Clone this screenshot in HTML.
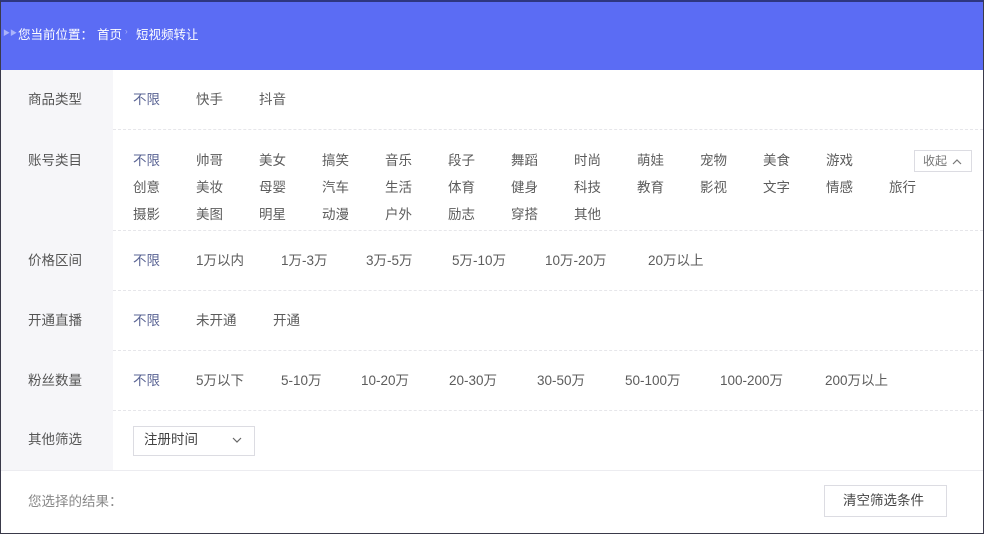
<!DOCTYPE html>
<html><head><meta charset="utf-8"><style>
*{margin:0;padding:0;box-sizing:border-box}
body{width:984px;height:534px;overflow:hidden;background:#fff;font-family:"Liberation Sans","Noto Sans CJK SC",sans-serif;font-size:13.5px;color:#5c5c5c;position:relative}
.frame{position:absolute;left:0;top:0;width:984px;height:534px;border:1px solid #3a3a4a;border-top:2px solid #2e3680}
.hd{position:absolute;left:0;top:0;width:984px;height:70px;background:#5b6cf4}
.hd span{position:absolute;top:24px;color:#fff;font-size:12.5px}
.col{position:absolute;left:1px;top:70px;width:112px;height:400px;background:#f6f6f9}
.t{position:absolute;white-space:nowrap;line-height:16px}
.lb{left:28px;color:#555}
.sel{color:#5a6494}
.sep{position:absolute;left:113px;width:870px;border-top:1px dashed #e6e6ea}
.box{position:absolute;border:1px solid #dcdce2;background:#fff}
</style></head><body>
<div class="hd">
<span style="left:3px;color:#aab3fb;font-size:7px;top:28px">▶▶</span>
<span style="left:18px">您当前位置：</span>
<span style="left:97px">首页</span>
<span style="left:125px;color:#aab3fb;font-size:8px;top:27px">›</span>
<span style="left:136px">短视频转让</span>
</div>
<div class="col"></div>
<div class="sep" style="top:129px"></div>
<div class="sep" style="top:230px"></div>
<div class="sep" style="top:290px"></div>
<div class="sep" style="top:350px"></div>
<div class="sep" style="top:410px"></div>
<div style="position:absolute;left:1px;top:470px;width:982px;border-top:1px solid #ececf0"></div>

<div class="t lb" style="top:92px">商品类型</div>
<div class="t sel" style="left:133px;top:92px">不限</div>
<div class="t" style="left:196px;top:92px">快手</div>
<div class="t" style="left:259px;top:92px">抖音</div>

<div class="t lb" style="top:153px">账号类目</div>
<div class="t sel" style="left:133px;top:153px">不限</div>
<div class="t" style="left:196px;top:153px">帅哥</div>
<div class="t" style="left:259px;top:153px">美女</div>
<div class="t" style="left:322px;top:153px">搞笑</div>
<div class="t" style="left:385px;top:153px">音乐</div>
<div class="t" style="left:448px;top:153px">段子</div>
<div class="t" style="left:511px;top:153px">舞蹈</div>
<div class="t" style="left:574px;top:153px">时尚</div>
<div class="t" style="left:637px;top:153px">萌娃</div>
<div class="t" style="left:700px;top:153px">宠物</div>
<div class="t" style="left:763px;top:153px">美食</div>
<div class="t" style="left:826px;top:153px">游戏</div>
<div class="box" style="left:914px;top:150px;width:58px;height:22px"></div>
<div class="t" style="left:923px;top:153px;font-size:12px;color:#777">收起</div>
<svg style="position:absolute;left:952px;top:158px" width="10" height="7"><path d="M1 6L5 2L9 6" fill="none" stroke="#777" stroke-width="1.2"/></svg>
<div class="t" style="left:133px;top:180px">创意</div>
<div class="t" style="left:196px;top:180px">美妆</div>
<div class="t" style="left:259px;top:180px">母婴</div>
<div class="t" style="left:322px;top:180px">汽车</div>
<div class="t" style="left:385px;top:180px">生活</div>
<div class="t" style="left:448px;top:180px">体育</div>
<div class="t" style="left:511px;top:180px">健身</div>
<div class="t" style="left:574px;top:180px">科技</div>
<div class="t" style="left:637px;top:180px">教育</div>
<div class="t" style="left:700px;top:180px">影视</div>
<div class="t" style="left:763px;top:180px">文字</div>
<div class="t" style="left:826px;top:180px">情感</div>
<div class="t" style="left:889px;top:180px">旅行</div>
<div class="t" style="left:133px;top:207px">摄影</div>
<div class="t" style="left:196px;top:207px">美图</div>
<div class="t" style="left:259px;top:207px">明星</div>
<div class="t" style="left:322px;top:207px">动漫</div>
<div class="t" style="left:385px;top:207px">户外</div>
<div class="t" style="left:448px;top:207px">励志</div>
<div class="t" style="left:511px;top:207px">穿搭</div>
<div class="t" style="left:574px;top:207px">其他</div>

<div class="t lb" style="top:253px">价格区间</div>
<div class="t sel" style="left:133px;top:253px">不限</div>
<div class="t" style="left:196px;top:253px">1万以内</div>
<div class="t" style="left:281px;top:253px">1万-3万</div>
<div class="t" style="left:366px;top:253px">3万-5万</div>
<div class="t" style="left:452px;top:253px">5万-10万</div>
<div class="t" style="left:545px;top:253px">10万-20万</div>
<div class="t" style="left:648px;top:253px">20万以上</div>

<div class="t lb" style="top:313px">开通直播</div>
<div class="t sel" style="left:133px;top:313px">不限</div>
<div class="t" style="left:196px;top:313px">未开通</div>
<div class="t" style="left:273px;top:313px">开通</div>

<div class="t lb" style="top:373px">粉丝数量</div>
<div class="t sel" style="left:133px;top:373px">不限</div>
<div class="t" style="left:196px;top:373px">5万以下</div>
<div class="t" style="left:281px;top:373px">5-10万</div>
<div class="t" style="left:361px;top:373px">10-20万</div>
<div class="t" style="left:449px;top:373px">20-30万</div>
<div class="t" style="left:537px;top:373px">30-50万</div>
<div class="t" style="left:625px;top:373px">50-100万</div>
<div class="t" style="left:720px;top:373px">100-200万</div>
<div class="t" style="left:825px;top:373px">200万以上</div>

<div class="t lb" style="top:432px">其他筛选</div>
<div class="box" style="left:133px;top:426px;width:122px;height:30px"></div>
<div class="t" style="left:144px;top:432px;color:#444">注册时间</div>
<svg style="position:absolute;left:232px;top:437px" width="10" height="7"><path d="M1 1L5 5L9 1" fill="none" stroke="#666" stroke-width="1.2"/></svg>

<div class="t" style="left:28px;top:494px;color:#888">您选择的结果：</div>
<div class="box" style="left:824px;top:485px;width:123px;height:32px"></div>
<div class="t" style="left:843px;top:493px;color:#444">清空筛选条件</div>
<div class="frame"></div>
</body></html>
